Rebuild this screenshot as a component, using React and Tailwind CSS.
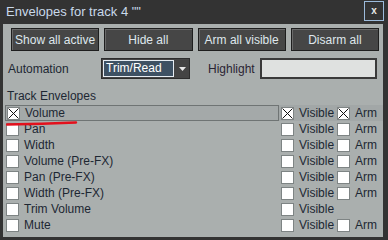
import React from "react";

const rows = [
  { name: "Volume", checked: true, arm: true, active: true },
  { name: "Pan", arm: true },
  { name: "Width", arm: true },
  { name: "Volume (Pre-FX)", arm: true },
  { name: "Pan (Pre-FX)", arm: true },
  { name: "Width (Pre-FX)", arm: true },
  { name: "Trim Volume", arm: false },
  { name: "Mute", arm: true },
];

const Box = ({ checked }) => (
  <span className="w-[13px] h-[13px] shrink-0 bg-white border border-[#7e8484] flex items-center justify-center">
    {checked ? (
      <svg width="11" height="11" viewBox="0 0 11 11">
        <path d="M0.5 0.5 L10.5 10.5 M10.5 0.5 L0.5 10.5" stroke="#111" strokeWidth="1" />
      </svg>
    ) : null}
  </span>
);

const buttons = ["Show all active", "Hide all", "Arm all visible", "Disarm all"];

export default function App() {
  return (
    <div
      className="w-[388px] h-[240px] bg-[#333333] flex flex-col overflow-hidden"
      style={{ fontFamily: '"Liberation Sans", Arial, sans-serif' }}
    >
      <div className="h-[24px] shrink-0 flex items-center justify-between pl-[6px] pr-[4px]">
        <span className="text-[13px] text-[#c9d9ea]">Envelopes for track 4 ""</span>
        <button className="w-[20px] h-[20px] mt-[-2px] border border-[#9dbbdb] flex items-center justify-center text-[10px] font-bold text-[#e8e8e8] leading-none">
          x
        </button>
      </div>

      <div className="relative flex-1 ml-[3px] mr-[5px] mb-[3px] bg-[#aaafae] flex flex-col">
        <div className="grid grid-cols-4 gap-[5px] pl-[8px] pr-[4px] pt-[4px]">
          {buttons.map((b) => (
            <button
              key={b}
              className="h-[23px] bg-[#464646] border border-[#1e1e1e] shadow-[inset_1px_1px_0_#6a6a6a] text-[12px] text-[#dfe6ec]"
            >
              {b}
            </button>
          ))}
        </div>

        <div className="flex items-center h-[21px] mt-[7px] pl-[5px] text-[12px] text-[#1d2733]">
          <span className="w-[93px]">Automation</span>
          <div className="w-[89px] h-[21px] flex border border-[#2d2d2d] bg-[#444]">
            <span className="flex-1 m-[1px] border border-[#e6ecf2] bg-[#3e5163] text-white text-[12px] leading-[15px] pl-[2px]">
              Trim/Read
            </span>
            <span className="w-[14px] flex items-center justify-center">
              <svg width="7" height="4" viewBox="0 0 7 4">
                <path d="M0 0 H7 L3.5 4 Z" fill="#e8e8e8" />
              </svg>
            </span>
          </div>
          <span className="ml-[18px] text-[#2a2433]">Highlight</span>
          <div className="ml-[5px] w-[117px] h-[21px] bg-[#dfe1e0] border-2 border-[#3a3a3a]" />
        </div>

        <div className="pl-[4px] mt-[10px] text-[12px] text-[#1d2733] leading-[14px]">Track Envelopes</div>

        <div className="flex flex-col mt-[2px] text-[12px] text-[#1d2733]">
          {rows.map((r) => (
            <div key={r.name} className="flex items-center h-[16px] pl-[2px]">
              <div
                className={
                  "w-[274px] h-[16px] flex items-center gap-[5px] pl-[1px] " +
                  (r.active ? "border border-[#6f7474] bg-[#a4a9a9]" : "")
                }
              >
                <Box checked={r.checked} />
                <span>{r.name}</span>
              </div>
              <div className={"flex items-center h-[16px] w-[104px] pl-[2px] " + (r.active ? "bg-[#a2a7a7]" : "")}>
                <div className="flex items-center gap-[5px] w-[56px]">
                  <Box checked={r.checked} />
                  <span>Visible</span>
                </div>
                {r.arm ? (
                  <div className="flex items-center gap-[5px]">
                    <Box checked={r.checked} />
                    <span>Arm</span>
                  </div>
                ) : null}
              </div>
            </div>
          ))}
        </div>

        <svg className="absolute left-[3px] top-[97px]" width="72" height="5" viewBox="0 0 72 5">
          <path d="M1 3.5 Q36 3 70 1.5" stroke="#e3101c" strokeWidth="2.5" fill="none" strokeLinecap="round" />
        </svg>
      </div>
    </div>
  );
}
